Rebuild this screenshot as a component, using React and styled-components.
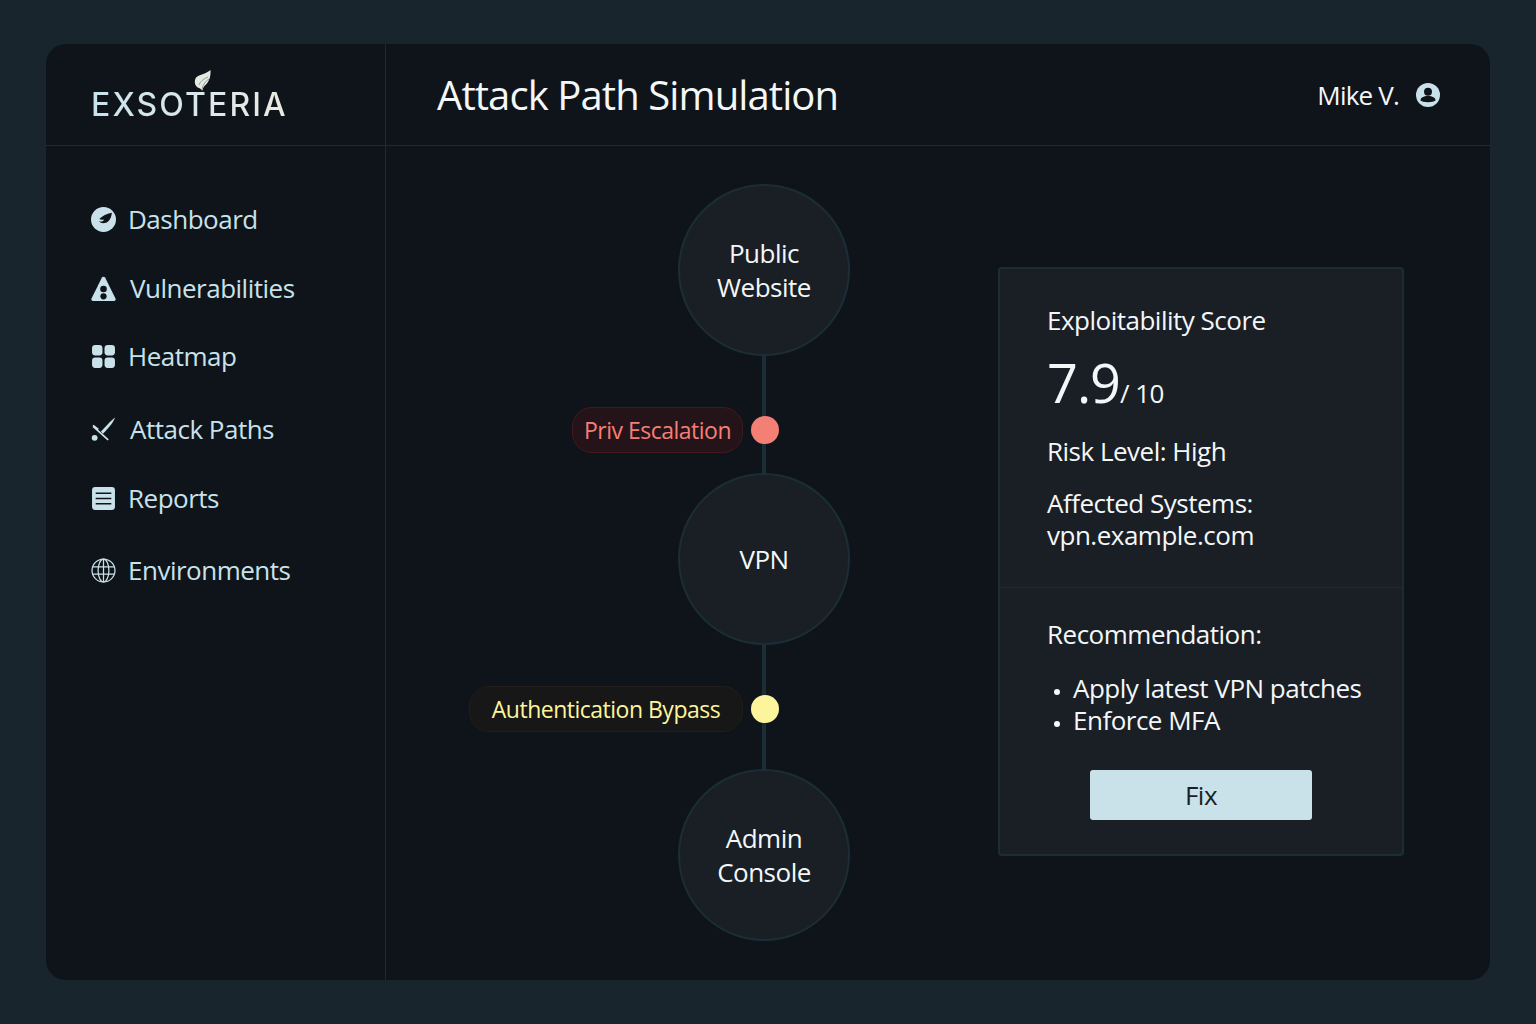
import styled, { createGlobalStyle } from "styled-components";

const GlobalStyle = createGlobalStyle`
  html, body { margin: 0; padding: 0; }
  body {
    background: #18252d;
    font-family: "Open Sans", "Liberation Sans", sans-serif;
  }
`;

const Page = styled.div`
  width: 1536px;
  height: 1024px;
  padding: 44px 46px;
  box-sizing: border-box;
  background: #18252d;
  overflow: hidden;
`;

const Shell = styled.div`
  width: 1444px;
  height: 936px;
  background: #0f141a;
  border-radius: 20px;
  display: flex;
  flex-direction: column;
  overflow: hidden;
`;

const Header = styled.header`
  height: 102px;
  flex: none;
  display: flex;
  box-sizing: border-box;
  border-bottom: 1px solid #1b2a33;
`;

const LogoCell = styled.div`
  width: 340px;
  flex: none;
  box-sizing: border-box;
  border-right: 1px solid #1b2a33;
  padding: 44px 0 0 45px;
`;

const Logo = styled.div`
  position: relative;
  width: 214px;
  height: 34px;
  font-family: Inter, "Liberation Sans", sans-serif;
  font-size: 32px;
  font-weight: 500;
  line-height: 34px;
  letter-spacing: 2.1px;
  white-space: nowrap;
  background: linear-gradient(90deg, #c8e3ee 0%, #dfe9e9 60%, #f0e9dc 100%);
  -webkit-background-clip: text;
  background-clip: text;
  color: transparent;
`;

const LeafMark = styled.svg`
  position: absolute;
  left: 102px;
  top: -19px;
  width: 20px;
  height: 26px;
`;

const TitleBar = styled.div`
  flex: 1;
  display: flex;
  align-items: center;
  justify-content: space-between;
  padding: 0 50px 0 51px;
`;

const Title = styled.h1`
  margin: 0;
  font-size: 40px;
  font-weight: 400;
  letter-spacing: -0.9px;
  color: #f4f7f8;
`;

const User = styled.div`
  display: flex;
  align-items: center;
  gap: 17px;
  font-size: 26px;
  letter-spacing: -0.8px;
  color: #f4f7f8;
`;

const Body = styled.div`
  flex: 1;
  display: flex;
  min-height: 0;
`;

const Sidebar = styled.nav`
  width: 340px;
  flex: none;
  box-sizing: border-box;
  border-right: 1px solid #1b2a33;
  padding: 56px 0 0 45px;
  display: flex;
  flex-direction: column;
`;

const NavItem = styled.div`
  height: 34px;
  display: flex;
  align-items: center;
  gap: ${(p) => p.$gap || 12}px;
  margin-bottom: ${(p) => p.$after || 35}px;
  font-size: 26px;
  letter-spacing: -0.5px;
  color: #c9e2ea;
`;

const NavIcon = styled.svg`
  width: 25px;
  height: 25px;
  flex: none;
`;

const Main = styled.main`
  flex: 1;
  display: flex;
  align-items: flex-start;
  padding: 38px 0 0 292px;
`;

const Graph = styled.div`
  width: 172px;
  flex: none;
  display: flex;
  flex-direction: column;
  align-items: center;
`;

const Node = styled.div`
  width: 172px;
  height: 172px;
  flex: none;
  box-sizing: border-box;
  border-radius: 50%;
  background: #1a1f26;
  border: 2px solid #1b2e36;
  display: flex;
  align-items: center;
  justify-content: center;
  text-align: center;
  font-size: 26px;
  line-height: 34px;
  letter-spacing: -0.5px;
  color: #f4f7f8;
`;

const Connector = styled.div`
  position: relative;
  width: 4px;
  height: ${(p) => p.$height}px;
  flex: none;
  background: #1b2e36;
`;

const Flag = styled.div`
  position: absolute;
  right: -13px;
  top: ${(p) => p.$top}px;
  height: 46px;
  display: flex;
  align-items: center;
  gap: 8px;
`;

const Pill = styled.span`
  width: ${(p) => p.$width}px;
  height: 46px;
  box-sizing: border-box;
  display: flex;
  align-items: center;
  justify-content: center;
  border-radius: 20px;
  border: 1px solid ${(p) => p.$line};
  background: ${(p) => p.$fill};
  color: ${(p) => p.$color};
  font-size: 23px;
  letter-spacing: -0.5px;
  white-space: nowrap;
`;

const Dot = styled.span`
  width: 28px;
  height: 28px;
  flex: none;
  border-radius: 50%;
  background: ${(p) => p.$color};
`;

const Card = styled.aside`
  width: 406px;
  height: 589px;
  flex: none;
  box-sizing: border-box;
  margin: 83px 0 0 148px;
  background: #1a1f26;
  border: 2px solid #1b2e36;
  border-radius: 4px;
  color: #f4f7f8;
  display: flex;
  flex-direction: column;
`;

const ScoreSection = styled.section`
  height: 319px;
  flex: none;
  box-sizing: border-box;
  padding: 35px 20px 0 47px;
  border-bottom: 1px solid #1b2e36;
`;

const CardText = styled.p`
  margin: ${(p) => p.$top || 0}px 0 0;
  font-size: 26px;
  line-height: 32px;
  letter-spacing: -0.5px;
`;

const Score = styled.div`
  margin-top: 14px;
  display: flex;
  align-items: baseline;
  font-size: 54px;
  line-height: 64px;
  letter-spacing: -1px;
`;

const ScoreMax = styled.span`
  font-size: 26px;
  letter-spacing: -0.5px;
`;

const FixSection = styled.section`
  flex: 1;
  padding: 30px 20px 0 47px;
`;

const Bullets = styled.ul`
  margin: 22px 0 0;
  padding: 0 0 0 26px;
  font-size: 26px;
  line-height: 32px;
  letter-spacing: -0.5px;
  li::marker { font-size: 18px; }
`;

const FixButton = styled.button`
  display: block;
  width: 222px;
  height: 50px;
  margin: 34px 0 0 43px;
  border: 0;
  border-radius: 3px;
  background: #c9e2ea;
  color: #1a1f26;
  font-family: inherit;
  font-size: 26px;
  letter-spacing: -0.5px;
`;

const DashIcon = () => (
  <NavIcon viewBox="0 0 24 24">
    <circle cx="12" cy="12" r="12" fill="#c9e2ea" />
    <path d="M20 5.5c-.4 4.6-2.2 8.4-5.6 9.6-2.6.9-5.4.2-6.9-1.5 2.6.8 4.6-.1 5.2-1.7-1.6.6-3.4.5-4.6-.3C10 9 14.800 6.600 20 5.500z" fill="#0f141a" />
  </NavIcon>
);

const VulnIcon = () => (
  <NavIcon viewBox="0 0 24 24">
    <path d="M10.500 1.500c.7-1.200 2.300-1.200 3 0l10 20c.6 1.200-.1 2.500-1.500 2.500H2c-1.400 0-2.100-1.300-1.500-2.500z" fill="#c9e2ea" />
    <circle cx="12" cy="12.500" r="3.200" fill="#0f141a" />
    <circle cx="12" cy="19.500" r="3" fill="#0f141a" />
  </NavIcon>
);

const HeatIcon = () => (
  <NavIcon viewBox="0 0 24 24">
    <rect x="1" y="1" width="10" height="10" rx="3" fill="#c9e2ea" />
    <rect x="13" y="1" width="10" height="10" rx="3" fill="#c9e2ea" />
    <rect x="1" y="13" width="10" height="10" rx="3" fill="#c9e2ea" />
    <rect x="13" y="13" width="10" height="10" rx="3" fill="#c9e2ea" />
  </NavIcon>
);

const AttackIcon = () => (
  <NavIcon viewBox="0 0 24 24">
    <path d="M23 .5c-.8 3.500-5 9-11.500 15.500l-2-2C14 9.500 19.500 3 23 .5z" fill="#c9e2ea" />
    <path d="M2 9l14.500 13" stroke="#c9e2ea" strokeWidth="1.600" fill="none" />
    <circle cx="3.500" cy="20" r="2.800" fill="#c9e2ea" />
    <path d="M2 8l5 4" stroke="#c9e2ea" strokeWidth="1.600" fill="none" />
  </NavIcon>
);

const ReportIcon = () => (
  <NavIcon viewBox="0 0 24 24">
    <rect x="1" y="1" width="22" height="22" rx="3" fill="#c9e2ea" />
    <path d="M4.500 7h15M4.500 12h15M4.500 17h15" stroke="#0f141a" strokeWidth="1.500" />
  </NavIcon>
);

const GlobeIcon = () => (
  <NavIcon viewBox="0 0 24 24" fill="none" stroke="#c9e2ea" strokeWidth="1.200">
    <circle cx="12" cy="12" r="11" />
    <ellipse cx="12" cy="12" rx="5.200" ry="11" />
    <path d="M12 1v22M1.500 8.500h21M1.500 15.500h21" />
  </NavIcon>
);

const UserIcon = () => (
  <svg width="24" height="24" viewBox="0 0 24 24">
    <circle cx="12" cy="12" r="12" fill="#c9e2ea" />
    <circle cx="12" cy="8.800" r="4" fill="#0f141a" />
    <path d="M4.500 17.500c0-3 3-4.500 7.500-4.500s7.500 1.500 7.500 4.500c-1.500 1.200-4 1.700-7.500 1.700s-6-.5-7.500-1.700z" fill="#0f141a" />
  </svg>
);

const navItems = [
  { label: "Dashboard", icon: <DashIcon />, after: 35 },
  { label: "Vulnerabilities", icon: <VulnIcon />, gap: 14, after: 34 },
  { label: "Heatmap", icon: <HeatIcon />, after: 39 },
  { label: "Attack Paths", icon: <AttackIcon />, gap: 14, after: 35 },
  { label: "Reports", icon: <ReportIcon />, after: 38 },
  { label: "Environments", icon: <GlobeIcon /> },
];

export default function App() {
  return (
    <Page>
      <GlobalStyle />
      <Shell>
        <Header>
          <LogoCell>
            <Logo>
              EXSOTERIA
              <LeafMark viewBox="0 0 20 26">
                <path d="M17.500 1c.3 5-.6 11-5 15-1.500 1.400-2.800 3-3.300 6-.6-1.500-2-2.600-4-3.300C2 17 1 13 2.500 9.500 5 5 12 6 17.500 1z" fill="#e6e8e2" />
                <path d="M9 21c.3-4 2.500-8 7-11M6 16c1-3 4-6 9-8" stroke="#8b9a9c" strokeWidth="1" fill="none" />
              </LeafMark>
            </Logo>
          </LogoCell>
          <TitleBar>
            <Title>Attack Path Simulation</Title>
            <User>
              Mike V.
              <UserIcon />
            </User>
          </TitleBar>
        </Header>
        <Body>
          <Sidebar>
            {navItems.map((item) => (
              <NavItem key={item.label} $gap={item.gap} $after={item.after}>
                {item.icon}
                {item.label}
              </NavItem>
            ))}
          </Sidebar>
          <Main>
            <Graph>
              <Node>Public<br />Website</Node>
              <Connector $height={117}>
                <Flag $top={51}>
                  <Pill $width={171} $line="#43191f" $fill="#241419" $color="#f47f75">Priv Escalation</Pill>
                  <Dot $color="#f47f75" />
                </Flag>
              </Connector>
              <Node>VPN</Node>
              <Connector $height={124}>
                <Flag $top={41}>
                  <Pill $width={274} $line="#211d19" $fill="#171717" $color="#fdf59c">Authentication Bypass</Pill>
                  <Dot $color="#fdf59c" />
                </Flag>
              </Connector>
              <Node>Admin<br />Console</Node>
            </Graph>
            <Card>
              <ScoreSection>
                <CardText>Exploitability Score</CardText>
                <Score>7.9<ScoreMax>/ 10</ScoreMax></Score>
                <CardText $top={10}>Risk Level: High</CardText>
                <CardText $top={20}>Affected Systems:<br />vpn.example.com</CardText>
              </ScoreSection>
              <FixSection>
                <CardText>Recommendation:</CardText>
                <Bullets>
                  <li>Apply latest VPN patches</li>
                  <li>Enforce MFA</li>
                </Bullets>
                <FixButton>Fix</FixButton>
              </FixSection>
            </Card>
          </Main>
        </Body>
      </Shell>
    </Page>
  );
}
